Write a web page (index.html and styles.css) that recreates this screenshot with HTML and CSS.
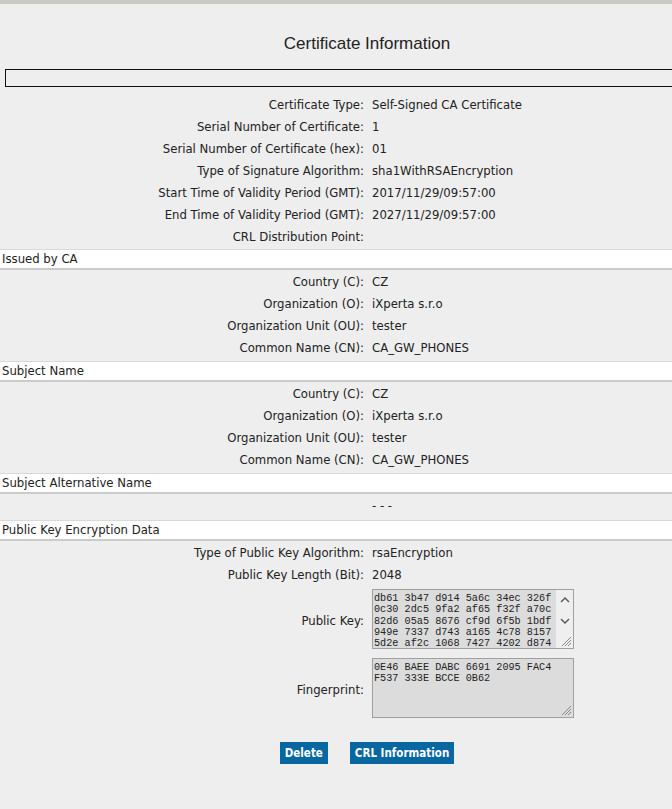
FILE: index.html
```html
<!DOCTYPE html>
<html>
<head>
<meta charset="utf-8">
<title>Certificate Information</title>
<link rel="stylesheet" href="styles.css">
</head>
<body>
<div class="topbar"></div>
<div class="page">
  <h1 class="title">Certificate Information</h1>
  <div class="msgbox"></div>

  <div class="rows first">
    <div class="lbl">Certificate Type:</div><div class="val">Self-Signed CA Certificate</div>
    <div class="lbl">Serial Number of Certificate:</div><div class="val">1</div>
    <div class="lbl">Serial Number of Certificate (hex):</div><div class="val">01</div>
    <div class="lbl">Type of Signature Algorithm:</div><div class="val">sha1WithRSAEncryption</div>
    <div class="lbl">Start Time of Validity Period (GMT):</div><div class="val">2017/11/29/09:57:00</div>
    <div class="lbl">End Time of Validity Period (GMT):</div><div class="val">2027/11/29/09:57:00</div>
    <div class="lbl">CRL Distribution Point:</div><div class="val"></div>
  </div>

  <div class="section">Issued by CA</div>
  <div class="rows">
    <div class="lbl">Country (C):</div><div class="val">CZ</div>
    <div class="lbl">Organization (O):</div><div class="val">iXperta s.r.o</div>
    <div class="lbl">Organization Unit (OU):</div><div class="val">tester</div>
    <div class="lbl">Common Name (CN):</div><div class="val">CA_GW_PHONES</div>
  </div>

  <div class="section">Subject Name</div>
  <div class="rows">
    <div class="lbl">Country (C):</div><div class="val">CZ</div>
    <div class="lbl">Organization (O):</div><div class="val">iXperta s.r.o</div>
    <div class="lbl">Organization Unit (OU):</div><div class="val">tester</div>
    <div class="lbl">Common Name (CN):</div><div class="val">CA_GW_PHONES</div>
  </div>

  <div class="section">Subject Alternative Name</div>
  <div class="rows alt">
    <div class="lbl"></div><div class="val">- - -</div>
  </div>

  <div class="section">Public Key Encryption Data</div>
  <div class="rows">
    <div class="lbl">Type of Public Key Algorithm:</div><div class="val">rsaEncryption</div>
    <div class="lbl">Public Key Length (Bit):</div><div class="val">2048</div>
    <div class="lbl">Public Key:</div>
    <div class="val tallval">
      <div class="ta">
        <div class="ta-text">db61 3b47 d914 5a6c 34ec 326f
0c30 2dc5 9fa2 af65 f32f a70c
82d6 05a5 8676 cf9d 6f5b 1bdf
949e 7337 d743 a165 4c78 8157
5d2e af2c 1068 7427 4202 d874
91c3 0be2 77a1 c4d0 e5f6 1a2b</div>
        <div class="ta-scroll">
          <svg class="chev" width="10" height="7" viewBox="0 0 10 7"><path d="M1 6 L5 2 L9 6" fill="none" stroke="#555" stroke-width="1.4"/></svg>
          <svg class="chev" width="10" height="7" viewBox="0 0 10 7"><path d="M1 1 L5 5 L9 1" fill="none" stroke="#555" stroke-width="1.4"/></svg>
        </div>
        <svg class="grip" width="12" height="12" viewBox="0 0 12 12"><path d="M11 2 L2 11 M11 5 L5 11 M11 8 L8 11" stroke="#888" stroke-width="1"/></svg>
      </div>
    </div>
    <div class="lbl">Fingerprint:</div>
    <div class="val tallval">
      <div class="ta">
        <div class="ta-text">0E46 BAEE DABC 6691 2095 FAC4
F537 333E BCCE 0B62</div>
        <svg class="grip" width="12" height="12" viewBox="0 0 12 12"><path d="M11 2 L2 11 M11 5 L5 11 M11 8 L8 11" stroke="#888" stroke-width="1"/></svg>
      </div>
    </div>
  </div>

  <div class="buttons">
    <button class="btn">Delete</button>
    <button class="btn">CRL Information</button>
  </div>
</div>
</body>
</html>
```

FILE: styles.css
```css
html, body {
  margin: 0;
  padding: 0;
  overflow: hidden;
  background: #eeeeee;
}
body {
  font-family: "DejaVu Sans", Verdana, sans-serif;
  font-size: 11.7px;
  color: #222;
}
.topbar {
  height: 4px;
  background: #c8c9c5;
}
.page {
  width: 734px;
}
.title {
  margin: 30px 0 0;
  height: 20px;
  line-height: 20px;
  text-align: center;
  font-family: "Liberation Sans", Arial, sans-serif;
  font-weight: normal;
  font-size: 17px;
  color: #222;
}
.msgbox {
  margin: 15px 0 0 5px;
  height: 16px;
  border: 1px solid #111;
}
.rows {
  display: grid;
  grid-template-columns: 364px 1fr;
  column-gap: 8px;
  grid-auto-rows: minmax(22px, auto);
  align-items: center;
  margin-bottom: 2px;
}
.rows.first {
  margin-top: 7px;
  margin-bottom: 1px;
}
.lbl {
  text-align: right;
  white-space: nowrap;
}
.val {
  white-space: nowrap;
}
.rows.alt {
  margin-bottom: 3px;
}
.section {
  margin-top: 1px;
  height: 18px;
  line-height: 18px;
  padding-left: 2px;
  background: #ffffff;
  border-top: 1px solid #d9d9d9;
  border-bottom: 2px solid #cbcbcb;
  margin-bottom: 1px;
}
.rows .tallval {
  padding: 3px 0 6px;
}
.ta {
  position: relative;
  box-sizing: border-box;
  width: 202px;
  height: 60px;
  background: #dcdcdc;
  border: 1px solid #a0a0a0;
  overflow: hidden;
  display: flex;
}
.ta-text {
  flex: 1;
  padding: 3px 1px;
  font-family: "Liberation Mono", "Courier New", monospace;
  font-size: 10.2px;
  line-height: 11.3px;
  white-space: pre;
  color: #222;
  overflow: hidden;
}
.ta-scroll {
  width: 17px;
  background: #efefef;
  display: flex;
  flex-direction: column;
  align-items: center;
  gap: 15px;
  padding-top: 6px;
}
.grip {
  position: absolute;
  right: 1px;
  bottom: 1px;
}
.buttons {
  display: flex;
  justify-content: center;
  gap: 22px;
  margin-top: 18px;
}
.btn {
  font-family: "DejaVu Sans Condensed", "DejaVu Sans", Verdana, sans-serif;
  font-stretch: condensed;
  font-weight: bold;
  font-size: 11.5px;
  color: #ffffff;
  background: #0866a1;
  border: none;
  padding: 0 5px;
  height: 22px;
  line-height: 22px;
}
```
